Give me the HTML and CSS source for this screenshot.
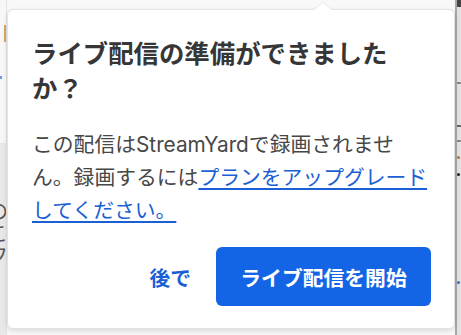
FILE: index.html
```html
<!DOCTYPE html>
<html lang="ja">
<head>
<meta charset="utf-8">
<link rel="stylesheet" href="styles.css">
</head>
<body>
<div class="page">
  <div class="side-left">
    <div class="sl-top">
      <span class="orange-bar"></span>
      <span class="blue-dot"></span>
    </div>
    <div class="sl-bottom">
      <span class="ghost">の</span>
      <span class="ghost">こ</span>
      <span class="ghost">フ</span>
    </div>
  </div>
  <div class="main"></div>
  <div class="side-right">
    <span class="rs-top"></span>
    <span class="rs-line l1"></span>
    <span class="rs-line l2"></span>
    <span class="rs-line l3"></span>
    <span class="rs-dot d1"></span>
    <span class="rs-dot d2"></span>
    <span class="rs-dot d3"></span>
  </div>
</div>

<div class="popover">
  <span class="arrow"></span>
  <h2 class="title">ライブ配信の準備ができましたか？</h2>
  <p class="text">この配信はStreamYardで録画されません。録画するには<a class="link" href="#">プランをアップグレードしてください。</a></p>
  <div class="actions">
    <button class="btn-text">後で</button>
    <button class="btn-primary">ライブ配信を開始</button>
  </div>
</div>
</body>
</html>
```
FILE: styles.css
```css
* { box-sizing: border-box; }
html, body {
  margin: 0;
  padding: 0;
  width: 461px;
  height: 335px;
  overflow: hidden;
}
body {
  font-family: "Inter", "Noto Sans CJK JP", sans-serif;
  background: #f6f6f6;
  position: relative;
}
.page {
  display: flex;
  height: 335px;
}
.side-left {
  width: 7px;
  display: flex;
  flex-direction: column;
  border-right: 1px solid #e4e4e4;
}
.sl-top {
  height: 143px;
  background: #f7f7f7;
  position: relative;
}
.orange-bar {
  position: absolute;
  left: 4px;
  top: 25px;
  width: 2px;
  height: 17px;
  background: #d9a560;
}
.blue-dot {
  position: absolute;
  left: 0;
  top: 76px;
  width: 2px;
  height: 3px;
  background: #6a9be8;
}
.sl-bottom {
  flex: 1;
  background: #e8e8e8;
  display: flex;
  flex-direction: column;
  padding-top: 58px;
  overflow: hidden;
}
.ghost {
  font-size: 20px;
  line-height: 22px;
  color: #555;
  margin-left: -12px;
}
.main {
  flex: 1;
  background: #f8f8f8;
}
.side-right {
  width: 6px;
  background: #e2e2e2;
  border-left: 2px solid #a8a8a8;
  position: relative;
}
.rs-top {
  position: absolute;
  top: 0;
  left: 0;
  width: 4px;
  height: 7px;
  background: #444;
}
.rs-line {
  position: absolute;
  left: 0;
  width: 4px;
  height: 2px;
  background: #888;
}
.l1 { top: 82px; }
.l2 { top: 125px; background: #666; }
.l3 { top: 140px; }
.rs-dot {
  position: absolute;
  left: 0;
  width: 3px;
  height: 3px;
  border-radius: 50%;
}
.d1 { top: 156px; background: #b07a30; }
.d2 { top: 173px; background: #222; }
.d3 { top: 281px; background: #3a6fd0; }

.popover {
  position: absolute;
  left: 7px;
  top: 9px;
  width: 448px;
  height: 320px;
  background: #fff;
  border-radius: 6px;
  border: 1px solid #e3e3e3;
  box-shadow: 0 2px 5px rgba(0,0,0,0.12);
  padding: 26px 23px 22px 24px;
  display: flex;
  flex-direction: column;
}
.arrow {
  position: absolute;
  top: -7px;
  left: 306px;
  width: 0;
  height: 0;
  border-left: 9px solid transparent;
  border-right: 9px solid transparent;
  border-bottom: 7px solid #fff;
  filter: drop-shadow(0 -1px 0 #e8e8e8);
}
.title {
  margin: 0;
  font-size: 25.4px;
  line-height: 35px;
  font-weight: 700;
  color: #363636;
}
.text {
  margin: 22px 0 0;
  font-size: 20.8px;
  line-height: 33px;
  font-weight: 400;
  color: #474747;
}
.link {
  color: #1a5fd4;
  text-decoration: underline;
  text-underline-offset: 3px;
  text-decoration-thickness: 1.5px;
}
.actions {
  margin-top: auto;
  display: flex;
  justify-content: flex-end;
  align-items: center;
  gap: 25px;
}
.btn-text {
  background: none;
  border: none;
  padding: 0;
  font-family: inherit;
  font-size: 20.8px;
  font-weight: 700;
  color: #1a5fd4;
}
.btn-primary {
  font-family: inherit;
  background: #1465e6;
  color: #fff;
  border: none;
  border-radius: 6px;
  height: 59px;
  width: 215px;
  font-size: 20.8px;
  font-weight: 700;
  padding: 0;
}
```
